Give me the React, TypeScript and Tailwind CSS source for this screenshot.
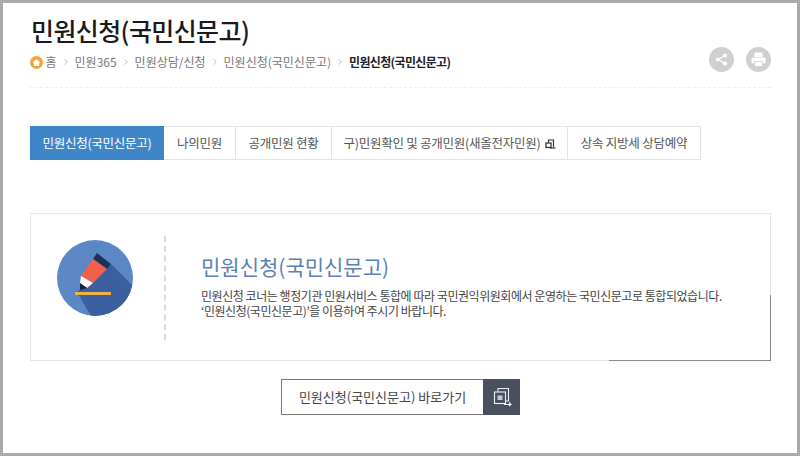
import React from 'react';
import { ChevronRight } from 'lucide-react';

const font = { fontFamily: '"Noto Sans CJK KR", "Noto Sans", sans-serif' };

const crumbs = ['민원365', '민원상담/신청', '민원신청(국민신문고)'];

const tabs = [
  { label: '민원신청(국민신문고)', width: 'w-[134px]', active: true },
  { label: '나의민원', width: 'w-[72px]' },
  { label: '공개민원 현황', width: 'w-[96px]' },
  { label: '구)민원확인 및 공개민원(새올전자민원)', width: 'w-[236px]', external: true },
  { label: '상속 지방세 상담예약', width: 'w-[133px]' },
];

function ExternalIcon() {
  return (
    <svg width="11" height="10" viewBox="0 0 11 10" className="ml-[4px] mt-[2px]">
      <path d="M3.5 3.5V1H8.5V8" fill="none" stroke="#333" strokeWidth="1.2" />
      <rect x="1" y="4" width="5" height="4.5" fill="none" stroke="#333" strokeWidth="1.3" />
      <path d="M5 9H10.5" stroke="#333" strokeWidth="1.2" />
    </svg>
  );
}

function PencilBadge() {
  return (
    <svg width="76" height="76" viewBox="0 0 76 76">
      <defs>
        <clipPath id="badge">
          <circle cx="38" cy="38" r="38" />
        </clipPath>
      </defs>
      <circle cx="38" cy="38" r="38" fill="#5b87c5" />
      <g clipPath="url(#badge)">
        <path d="M54 24L82 52V90H42L20 52Z" fill="#3c5f9f" />
        <path d="M40 13L54 24L50 29L36 19Z" fill="#1d3356" />
        <path d="M36 19L50 29L36 43L24 36Z" fill="#f0604a" />
        <path d="M24 36L36 43L30 48L23 43Z" fill="#ffffff" />
        <path d="M23 43L30 48L23 50Z" fill="#14233e" />
        <rect x="18" y="52" width="36" height="3" fill="#f0b044" />
      </g>
    </svg>
  );
}

function LinkIcon() {
  return (
    <svg width="20" height="20" viewBox="0 0 20 20" fill="none" stroke="#f0f1f4" strokeWidth="1.1">
      <path d="M6 4.5V1.5H16.5V14H14" />
      <rect x="2.5" y="5" width="11" height="11.5" />
      <rect x="5.5" y="8.5" width="5" height="4.5" fill="#c8cbd4" stroke="none" />
      <path d="M12 17.5H19M17 15.5L19 17.5L17 19" />
    </svg>
  );
}

export default function App() {
  return (
    <div style={font} className="w-[800px] h-[456px] overflow-hidden bg-white border-[3px] border-[#aaaaaa] text-[#333]">
      <div className="pl-[27px] pr-[26px]">
        <div className="flex items-start justify-between h-[81px] border-b border-dashed border-[#eeeeee] box-content pb-[3px]">
          <div>
            <h1 className="mt-[11px] ml-[1px] text-[25px] leading-[32px] font-medium text-[#1a1a1a] tracking-[-0.6px]">민원신청(국민신문고)</h1>
            <div className="mt-[6px] flex items-center h-[20px] text-[12px] text-[#777]">
              <span className="w-[13px] h-[13px] rounded-full bg-[#f2a33a] flex items-center justify-center mr-[2.5px]">
                <svg width="9" height="9" viewBox="0 0 9 9"><path d="M4.5 1L8.5 4.6H7.2V8H1.8V4.6H.5Z" fill="#fff" /></svg>
              </span>
              <span>홈</span>
              {crumbs.map(c => (
                <React.Fragment key={c}>
                  <ChevronRight size={10} strokeWidth={1.5} className="mx-[4px] text-[#999]" />
                  <span>{c}</span>
                </React.Fragment>
              ))}
              <ChevronRight size={10} strokeWidth={1.5} className="mx-[4px] text-[#999]" />
              <span className="font-bold text-[#222] tracking-[-0.65px]">민원신청(국민신문고)</span>
            </div>
          </div>
          <div className="flex gap-[12px] mt-[44px]">
            <span className="w-[25px] h-[25px] rounded-full bg-[#cfcfcf] flex items-center justify-center">
              <svg width="15" height="15" viewBox="0 0 15 15">
                <path d="M4 7.5L11 3.5M4 7.5L11 11.5" stroke="#fff" strokeWidth="1.3" />
                <circle cx="4" cy="7.5" r="2.1" fill="#fff" />
                <circle cx="11" cy="3.5" r="2.1" fill="#fff" />
                <circle cx="11" cy="11.5" r="2.1" fill="#fff" />
              </svg>
            </span>
            <span className="w-[25px] h-[25px] rounded-full bg-[#cfcfcf] flex items-center justify-center">
              <svg width="17" height="17" viewBox="0 0 17 17" fill="#fff">
                <rect x="4.5" y="1.5" width="8" height="4.5" />
                <rect x="1.5" y="6.5" width="14" height="6" rx="1" />
                <rect x="4.5" y="10.5" width="8" height="5" stroke="#cfcfcf" strokeWidth="0.8" />
              </svg>
            </span>
          </div>
        </div>

        <div className="mt-[38px] flex h-[34px] w-[671px]">
          {tabs.map(t => (
            <div
              key={t.label}
              className={
                t.active
                  ? `${t.width} shrink-0 flex items-center justify-center bg-[#3f86c8] text-white text-[12.5px] tracking-[-0.25px]`
                  : `${t.width} shrink-0 flex items-center justify-center border border-l-0 border-[#e4e4e4] text-[#555] text-[12.5px] tracking-[-0.25px]`
              }
            >
              {t.label}
              {t.external && <ExternalIcon />}
            </div>
          ))}
        </div>

        <div className="relative mt-[53px] h-[148px] w-[741px] border border-[#e5e5e5] flex items-center">
          <div className="ml-[26px] mt-[-18px] shrink-0"><PencilBadge /></div>
          <div className="ml-[31px] mt-[2px] h-[104px] border-l-2 border-dashed border-[#dcdcdc]" />
          <div className="ml-[35px] mt-[-1px]">
            <h2 className="mt-[-4px] text-[21px] leading-[28px] text-[#5a82b8]">민원신청(국민신문고)</h2>
            <p className="mt-[8px] text-[12px] leading-[15px] text-[#444] tracking-[-0.45px]">
              민원신청 코너는 행정기관 민원서비스 통합에 따라 국민권익위원회에서 운영하는 국민신문고로 통합되었습니다.
              <br />
              ‘민원신청(국민신문고)’을 이용하여 주시기 바랍니다.
            </p>
          </div>
          <span className="absolute right-[-1px] bottom-[-1px] w-px h-[66px] bg-[#8a8a8a]" />
          <span className="absolute right-[-1px] bottom-[-1px] w-[162px] h-px bg-[#8a8a8a]" />
        </div>

        <div className="mt-[18px] flex justify-center">
          <div className="flex h-[36px] w-[239px]">
            <div className="flex-1 flex items-center justify-center border border-[#777] border-r-0 text-[13px] text-[#444]">
              민원신청(국민신문고) 바로가기
            </div>
            <div className="w-[37px] bg-[#4a4f60] flex items-center justify-center"><LinkIcon /></div>
          </div>
        </div>
      </div>
    </div>
  );
}
